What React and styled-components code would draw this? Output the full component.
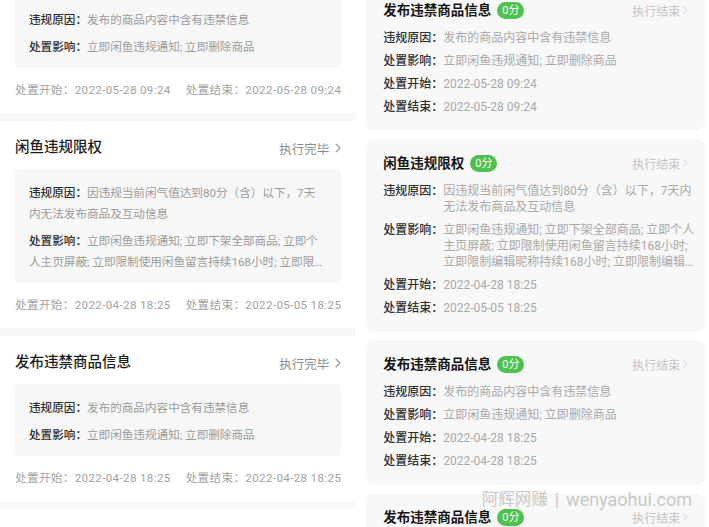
import React from "react";
import styled, { createGlobalStyle } from "styled-components";

const FONT = `Roboto, "Noto Sans CJK SC", sans-serif`;

const GlobalStyle = createGlobalStyle`
  html, body {
    margin: 0;
    padding: 0;
    height: 527px;
    overflow: hidden;
    background: #fff;
    font-family: ${FONT};
  }
  #root {
    height: 527px;
  }
`;

const HISTORY = [
  {
    id: 1,
    title: "发布违禁商品信息",
    reason: "发布的商品内容中含有违禁信息",
    effect: "立即闲鱼违规通知; 立即删除商品",
    start: "2022-05-28 09:24",
    end: "2022-05-28 09:24",
  },
  {
    id: 2,
    title: "闲鱼违规限权",
    reason: "因违规当前闲气值达到80分（含）以下，7天内无法发布商品及互动信息",
    effect:
      "立即闲鱼违规通知; 立即下架全部商品; 立即个人主页屏蔽; 立即限制使用闲鱼留言持续168小时; 立即限制编辑昵称持续168小时; 立即限制编辑头像持续168小时",
    start: "2022-04-28 18:25",
    end: "2022-05-05 18:25",
  },
  {
    id: 3,
    title: "发布违禁商品信息",
    reason: "发布的商品内容中含有违禁信息",
    effect: "立即闲鱼违规通知; 立即删除商品",
    start: "2022-04-28 18:25",
    end: "2022-04-28 18:25",
  },
  {
    id: 4,
    title: "发布违禁商品信息",
    reason: "发布的商品内容中含有违禁信息",
    effect: "立即闲鱼违规通知; 立即删除商品",
    start: "2022-04-20 11:02",
    end: "2022-04-20 11:02",
  },
];

const Page = styled.div`
  position: relative;
  display: flex;
  gap: 10px;
  height: 527px;
  overflow: hidden;
`;

/* ---------- old style list (left) ---------- */

const OldList = styled.div`
  flex: 0 0 355px;
  display: flex;
  flex-direction: column;
  gap: 8px;
  margin-top: -52px;
  background: #f8f8f8;
`;

const OldCard = styled.div`
  background: #fff;
  padding: 18px 15px 13px;
`;

const OldHeader = styled.div`
  display: flex;
  align-items: center;
  justify-content: space-between;
  height: 18px;
`;

const OldTitle = styled.div`
  font-size: 14.5px;
  line-height: 18px;
  font-weight: 500;
  color: #1c1c1c;
`;

const OldStatus = styled.div`
  display: flex;
  align-items: center;
  gap: 6px;
  font-size: 12.5px;
  color: #8e8e8e;
`;

const OldBox = styled.div`
  margin-top: 12px;
  padding: 14px 17px 10px 14px;
  background: #f7f7f7;
  border-radius: 3px;
  display: flex;
  flex-direction: column;
  gap: 6px;
`;

const OldLine = styled.p`
  margin: 0;
  font-size: 11.6px;
  line-height: 21px;
  color: #9b9b9b;
  display: -webkit-box;
  -webkit-box-orient: vertical;
  -webkit-line-clamp: ${(p) => p.$lines};
  overflow: hidden;
`;

const OldLabel = styled.span`
  color: #2e2e2e;
  font-weight: 500;
`;

const OldFooter = styled.div`
  margin-top: 12px;
  display: flex;
  gap: 15px;
  font-size: 11.6px;
  line-height: 20px;
  letter-spacing: 0.35px;
  white-space: nowrap;
  color: #a2a2a2;
`;

/* ---------- new style list (right) ---------- */

const NewList = styled.div`
  flex: 1;
  display: flex;
  flex-direction: column;
  gap: 8px;
  margin-top: -14px;
  padding-right: 4px;
`;

const NewCard = styled.div`
  background: #f8f8f8;
  border-radius: 8px;
  padding: 15px 10px 16px 17px;
`;

const NewHeader = styled.div`
  display: flex;
  align-items: center;
  height: 18px;
  padding-right: 7px;
`;

const NewTitle = styled.div`
  font-size: 13.5px;
  line-height: 18px;
  font-weight: 700;
  color: #141414;
`;

const ScoreBadge = styled.span`
  margin-left: 6px;
  height: 17px;
  padding: 0 5px;
  border-radius: 9px;
  background: #4fc14f;
  color: #fff;
  font-size: 11px;
  line-height: 17px;
`;

const NewStatus = styled.div`
  margin-left: auto;
  display: flex;
  align-items: center;
  gap: 3px;
  font-size: 12px;
  color: #c4c4c4;
`;

const NewRows = styled.div`
  margin-top: 11px;
  display: flex;
  flex-direction: column;
  gap: 7px;
`;

const NewRow = styled.div`
  display: flex;
  font-size: 12px;
  line-height: 16px;
`;

const NewLabel = styled.span`
  flex-shrink: 0;
  color: #303030;
  font-weight: 500;
`;

const NewValue = styled.span`
  width: 255px;
  color: #a9a9a9;
  display: -webkit-box;
  -webkit-box-orient: vertical;
  -webkit-line-clamp: 3;
  overflow: hidden;
`;

const Watermark = styled.div`
  position: absolute;
  right: 17px;
  top: 488px;
  display: flex;
  align-items: center;
  gap: 7px;
  font-size: 18px;
  line-height: 24px;
  color: rgba(150, 150, 150, 0.5);
  pointer-events: none;
`;

const WatermarkCn = styled.span`
  font-size: 16.5px;
`;

const Chevron = ({ size = 10, color }) => (
  <svg width={size * 0.6} height={size} viewBox="0 0 6 10" fill="none">
    <polyline
      points="1,1 5,5 1,9"
      stroke={color}
      strokeWidth="1.1"
      strokeLinecap="round"
      strokeLinejoin="round"
    />
  </svg>
);

const OldRecord = ({ item }) => (
  <OldCard>
    <OldHeader>
      <OldTitle>{item.title}</OldTitle>
      <OldStatus>
        执行完毕
        <Chevron size={10} color="#9a9a9a" />
      </OldStatus>
    </OldHeader>
    <OldBox>
      <OldLine $lines={3}>
        <OldLabel>违规原因：</OldLabel>
        {item.reason}
      </OldLine>
      <OldLine $lines={2}>
        <OldLabel>处置影响：</OldLabel>
        {item.effect}
      </OldLine>
    </OldBox>
    <OldFooter>
      <span>处置开始：{item.start}</span>
      <span>处置结束：{item.end}</span>
    </OldFooter>
  </OldCard>
);

const NewRecord = ({ item }) => (
  <NewCard>
    <NewHeader>
      <NewTitle>{item.title}</NewTitle>
      <ScoreBadge>0分</ScoreBadge>
      <NewStatus>
        执行结束
        <Chevron size={8} color="#cacaca" />
      </NewStatus>
    </NewHeader>
    <NewRows>
      <NewRow>
        <NewLabel>违规原因：</NewLabel>
        <NewValue>{item.reason}</NewValue>
      </NewRow>
      <NewRow>
        <NewLabel>处置影响：</NewLabel>
        <NewValue>{item.effect}</NewValue>
      </NewRow>
      <NewRow>
        <NewLabel>处置开始：</NewLabel>
        <NewValue>{item.start}</NewValue>
      </NewRow>
      <NewRow>
        <NewLabel>处置结束：</NewLabel>
        <NewValue>{item.end}</NewValue>
      </NewRow>
    </NewRows>
  </NewCard>
);

export default function App() {
  return (
    <>
      <GlobalStyle />
      <Page>
        <OldList>
          {HISTORY.map((item) => (
            <OldRecord key={item.id} item={item} />
          ))}
        </OldList>
        <NewList>
          {HISTORY.map((item) => (
            <NewRecord key={item.id} item={item} />
          ))}
        </NewList>
        <Watermark>
          <WatermarkCn>阿辉网赚</WatermarkCn>
          <span>|</span>
          <span>wenyaohui.com</span>
        </Watermark>
      </Page>
    </>
  );
}
